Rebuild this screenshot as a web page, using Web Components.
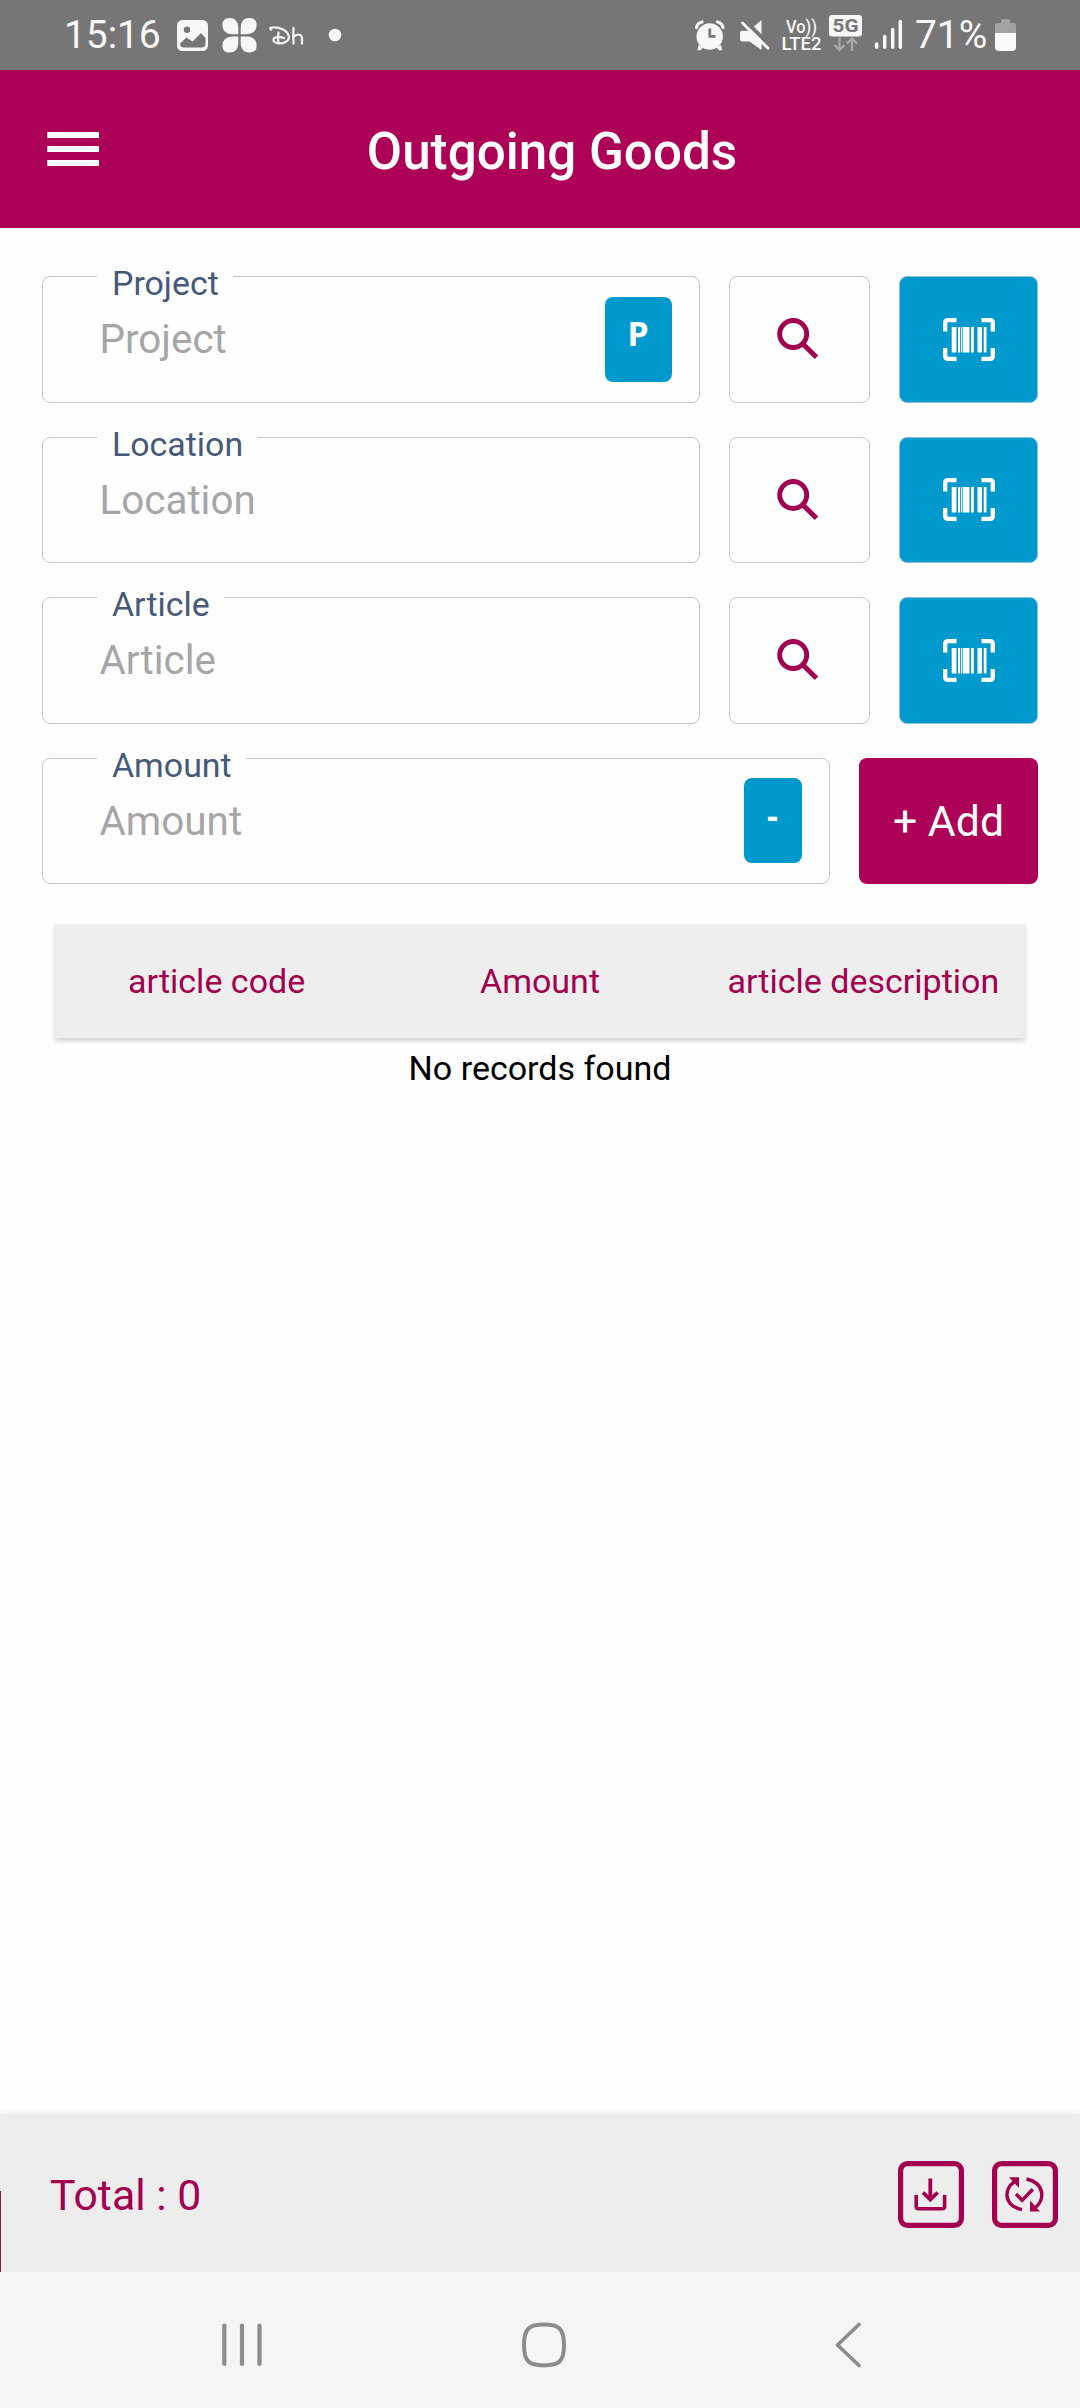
<!DOCTYPE html>
<html lang="en">
<head>
<meta charset="utf-8">
<title>Outgoing Goods</title>
<style>
html,body{margin:0;padding:0}
body{width:1080px;height:2408px;background:#fefefe;font-family:Roboto,"Liberation Sans",sans-serif;overflow:hidden;
--brand:#ad0057;--blue:#0099cd;--line:#c6c6c6}
</style>
</head>
<body>
<outgoing-app></outgoing-app>
<script>
const define=(name,html)=>customElements.define(name,class extends HTMLElement{
  constructor(){super();const t=document.createElement('template');t.innerHTML=html;
    this.attachShadow({mode:'open'}).append(t.content.cloneNode(true));}
});

define('status-bar',`<style>
:host{display:flex;height:70px;box-sizing:border-box;background:#767676;color:#f7f7f7;align-items:flex-start;line-height:70px;font-size:39px}
svg{display:block;flex:none}
.clock{width:111px;padding-left:64px;letter-spacing:-.1px;white-space:nowrap}
.pct{width:78px;letter-spacing:-.1px;white-space:nowrap}
.gap{flex:1}
</style>
<span class="clock">15:16</span>
<svg width="171" height="70" viewBox="175 0 171 70">
 <rect x="177" y="20" width="31" height="31" rx="5.500" fill="#f7f7f7"/>
 <circle cx="187" cy="29.700" r="3.200" fill="#767676"/>
 <path d="M180 43.500l6.500-6 6 4 8.500-8.500 4.500 5V43.500a4 4 0 0 1-4 4H184a4 4 0 0 1-4-4z" fill="#767676"/>
 <g fill="#f7f7f7">
 <path d="M238.300 34.200V28.500C238.300 21 235 18 229.500 18C224.500 18 222.400 21 222.400 24.700C222.400 31.500 227 34.200 233 34.200z"/>
 <path d="M238.300 34.200V28.500C238.300 21 235 18 229.500 18C224.500 18 222.400 21 222.400 24.700C222.400 31.500 227 34.200 233 34.200z" transform="translate(479 0) scale(-1 1)"/>
 <path d="M238.300 34.200V28.500C238.300 21 235 18 229.500 18C224.500 18 222.400 21 222.400 24.700C222.400 31.500 227 34.200 233 34.200z" transform="translate(0 70.600) scale(1 -1)"/>
 <path d="M238.300 34.200V28.500C238.300 21 235 18 229.500 18C224.500 18 222.400 21 222.400 24.700C222.400 31.500 227 34.200 233 34.200z" transform="translate(479 70.600) scale(-1 -1)"/>
 </g>
 <g fill="none" stroke="#f0f0f0" stroke-width="2.300" stroke-linecap="round">
 <path d="M271 29.500C267.500 27 277 26.500 283 29.500C289.500 33 291 39 285.500 42C281 44.500 273 43.500 273.500 39.500C274 36.500 280 36.500 284 38M278.500 32.500Q277.300 38 278.500 43"/>
 <path d="M293.500 28Q293 37 293.500 43.500M293.500 37.500C294.500 34.500 301.500 32.500 302 38L302 43.500"/>
 </g>
 <circle cx="335" cy="35" r="6.300" fill="#f7f7f7"/>
</svg>
<span class="gap"></span>
<svg width="222" height="70" viewBox="693 0 222 70">
 <g fill="#f7f7f7">
 <circle cx="709.700" cy="36.500" r="13.200"/>
 <path d="M698.500 45l5 2-3 3.300h-3zM721 45l-5 2 3 3.300h3z"/>
 </g>
 <g fill="none" stroke="#f7f7f7" stroke-width="3.200" stroke-linecap="round"><path d="M696.500 27.500Q697.500 23 702 22M723 27.500Q722 23 717.500 22"/></g>
 <path d="M709.800 28.500V36.300H715.500" fill="none" stroke="#767676" stroke-width="2.700"/>
 <path d="M740 33q0-2 2-2.300h7L761.500 20V50L749.500 41.500h-7.500q-2-.300-2-2.300z" fill="#f7f7f7"/>
 <path d="M744.300 19.800L770.500 46" stroke="#767676" stroke-width="4"/>
 <path d="M742.500 23L768 48.300" stroke="#f7f7f7" stroke-width="2.800" stroke-linecap="round"/>
 <g fill="#f7f7f7" font-family="Roboto,sans-serif" font-weight="500">
 <text x="786" y="33" font-size="17.500" textLength="31" lengthAdjust="spacingAndGlyphs">Vo))</text>
 <text x="781.500" y="50" font-size="17.500" textLength="40" lengthAdjust="spacingAndGlyphs">LTE2</text></g>
 <rect x="829" y="15" width="33" height="21.500" rx="3" fill="#f7f7f7"/>
 <text x="832.500" y="32.200" font-size="18.500" font-family="Roboto,sans-serif" font-weight="700" fill="#767676" textLength="26" lengthAdjust="spacingAndGlyphs">5G</text>
 <g fill="none" stroke="#a8a8a8" stroke-width="2.300"><path d="M839.500 37.500V49.500M834.500 45L839.500 50L844.500 45M852 51V39M847 43.500L852 38.500L857 43.500"/></g>
 <g stroke="#f7f7f7" stroke-width="3.500" stroke-linecap="round"><path d="M876.700 44V47.300M884.700 36.500V47.300M892.700 29.500V47.300M900.300 21.500V47.300"/></g>
</svg>
<span class="pct">71%</span>
<svg width="87" height="70" viewBox="993 0 87 70">
 <path d="M995 33V26q0-3 3-3h3v-1.500q0-2.500 2.500-2.500h4.500q2.500 0 2.500 2.500V23h2.500q3 0 3 3v7z" fill="#a3a3a3"/>
 <path d="M995 33h21V47q0 4-4 4H999q-4 0-4-4z" fill="#fafafa"/>
</svg>`);

define('app-header',`<style>
:host{display:grid;grid-template-columns:147px 1fr 123px;height:158px;background:var(--brand);color:#fff;align-items:center}
svg{display:block}
h1{margin:0;font-size:51.200px;font-weight:500;text-align:center;line-height:60px;white-space:nowrap;padding-top:5px}
</style>
<svg width="147" height="158" viewBox="0 70 147 158"><path d="M47.300 135h51.700M47.300 149h51.700M47.300 163h51.700" stroke="#fff" stroke-width="6"/></svg>
<h1><slot></slot></h1>`);

define('outlined-field',`<style>
:host{display:flex;position:relative;flex:1;box-sizing:border-box;border:1px solid var(--line);border-radius:8px;align-items:center;justify-content:space-between;padding:0 27.500px 0 56.500px}
.label{position:absolute;left:54px;top:-13px;padding:0 14.500px 0 15px;background:#fefefe;color:#465a78;font-size:33.900px;line-height:40px;white-space:nowrap}
.hint{color:#a6a6a6;font-size:40.400px;line-height:48px;white-space:nowrap;padding-top:2px}
</style>
<span class="label"><slot name="label"></slot></span>
<span class="hint"><slot></slot></span>
<slot name="badge"></slot>`);

define('field-badge',`<style>
:host{display:flex;box-sizing:border-box;width:67px;height:85px;border-radius:8px;background:var(--blue);color:#fff;font:700 34px "Noto Sans",sans-serif;align-items:center;justify-content:center;padding-bottom:12px}
:host([narrow]){width:58px}
</style><slot></slot>`);

define('search-button',`<style>
:host{display:flex;box-sizing:border-box;width:141px;border:1px solid var(--line);border-radius:8px}
svg{display:block;margin:38px 0 0 44.500px}
</style>
<svg width="46" height="46" viewBox="0 0 46 46" fill="none" stroke="#a0004f"><circle cx="18.200" cy="19" r="13.500" stroke-width="4.900"/><path d="M27.500 28.500L41.500 42.300" stroke-width="5"/></svg>`);

define('scan-button',`<style>
:host{display:flex;box-sizing:border-box;width:139px;border-radius:8px;background:var(--blue);border:1px solid #8cc6dc;align-items:center;justify-content:center}
svg{display:block}
</style>
<svg width="52" height="43" viewBox="0 0 52 43"><g fill="none" stroke="#fff" stroke-width="4.300"><path d="M2.200 13.500V5q0-2.800 2.800-2.800H13.500M38.500 2.200H47q2.800 0 2.800 2.800V13.500M49.800 30V38q0 2.800-2.800 2.800H38.500M13.500 40.800H5q-2.800 0-2.800-2.800V30"/></g>
<path fill="#fff" d="M8.700 9h4.800v25.500H8.700zM15 9h2v25.500H15zM17.900 9h1v25.500H17.900zM19.700 9h6.800v25.500H19.700zM28 9h2.800v25.500H28zM34.500 9h4.400v25.500H34.500zM40.800 9h2.700v25.500H40.800z"/></svg>`);

define('add-button',`<style>
:host{display:flex;width:179px;border-radius:8px;background:var(--brand);color:#fff;font-size:42.800px;align-items:center;justify-content:center;white-space:nowrap}
</style><slot></slot>`);

define('form-row',`<style>
:host{display:flex;height:126.500px;gap:29px;align-items:stretch}
</style><slot></slot>`);

define('goods-form',`<style>
:host{display:flex;flex-direction:column;gap:34px;padding:48px 42px 0 42px}
</style><slot></slot>`);

define('records-table',`<style>
:host{display:block;margin:40px 55px 0;flex:1}
.head{display:grid;grid-template-columns:repeat(3,1fr);height:114px;align-items:center;text-align:center;background:#eeeeee;color:#a3004f;font-size:34px;box-shadow:0 3px 5px rgba(0,0,0,.18);white-space:nowrap}
.empty{text-align:center;color:#000;font-size:34px;line-height:40px;margin-top:10px}
</style>
<div class="head"><slot name="col"></slot></div>
<div class="empty"><slot></slot></div>`);

define('total-bar',`<style>
:host{display:flex;box-sizing:border-box;height:158px;background:#ededed;color:#a3004f;align-items:center;justify-content:space-between;padding:0 22px 0 0;box-shadow:0 -2px 5px rgba(0,0,0,.06)}
.edge{width:1px;height:81px;background:#8a1453;align-self:flex-end}
.total{font-size:42.800px;flex:1;padding:3px 0 0 49px}
.actions{display:flex;gap:28px;padding-top:2px}
svg{display:block}
</style>
<i class="edge"></i>
<span class="total"><slot></slot></span>
<div class="actions">
<svg width="66" height="67" viewBox="0 0 66 67" fill="none" stroke="#a3004f"><rect x="2.600" y="2.600" width="60.800" height="61.800" rx="7" stroke-width="5.200"/><path d="M32.300 17.500V38M25 31.500L32.300 38.700L39.600 31.500" stroke-width="3.800"/><path d="M18.200 34V45.500q0 2.300 2.300 2.300H44.300q2.300 0 2.300-2.300V34" stroke-width="3.600"/></svg>
<svg width="66" height="67" viewBox="0 0 66 67" fill="none" stroke="#a3004f"><rect x="2.600" y="2.600" width="60.800" height="61.800" rx="7" stroke-width="5.200"/><path d="M30 48.600C11 44.500 12 27.500 22.300 21M34.500 18C53 22 53 39 43.500 46.500" stroke-width="3.500"/><path d="M17 16.300H27V27zM38 39.500V50.500H48z" fill="#a3004f" stroke="none"/><path d="M24 33L30.200 39.200L40.800 28.300" stroke-width="3.500"/></svg>
</div>`);

define('nav-bar',`<style>
:host{display:grid;grid-template-columns:301px 312.500px 1fr;height:136px;background:#f5f5f5;align-items:center;padding:0 0 0 221px}
svg{display:block;margin-top:9px}
</style>
<svg width="42" height="46" viewBox="0 0 42 46"><path d="M3.300 3.500V42M21 3.500V42M38.500 3.500V42" stroke="#8c8c8c" stroke-width="4.200" stroke-linecap="round"/></svg>
<svg width="44" height="46" viewBox="0 0 44 46"><path d="M22 2.600C36.500 2.600 42 6 42 23S36.500 43.400 22 43.400S2 40 2 23S7.500 2.600 22 2.600z" fill="none" stroke="#8c8c8c" stroke-width="4"/></svg>
<svg width="27" height="46" viewBox="0 0 27 46"><path d="M24 2.500L2.500 23L24 43.500" fill="none" stroke="#8c8c8c" stroke-width="3.600" stroke-linecap="round" stroke-linejoin="round"/></svg>`);

define('outgoing-app',`<style>
:host{display:flex;flex-direction:column;width:1080px;height:2408px;background:#fefefe}
</style>
<status-bar></status-bar>
<app-header>Outgoing Goods</app-header>
<goods-form>
 <form-row><outlined-field><span slot="label">Project</span>Project<field-badge slot="badge">P</field-badge></outlined-field><search-button></search-button><scan-button></scan-button></form-row>
 <form-row><outlined-field><span slot="label">Location</span>Location</outlined-field><search-button></search-button><scan-button></scan-button></form-row>
 <form-row><outlined-field><span slot="label">Article</span>Article</outlined-field><search-button></search-button><scan-button></scan-button></form-row>
 <form-row><outlined-field><span slot="label">Amount</span>Amount<field-badge slot="badge" narrow>-</field-badge></outlined-field><add-button>+ Add</add-button></form-row>
</goods-form>
<records-table><span slot="col">article code</span><span slot="col">Amount</span><span slot="col">article description</span>No records found</records-table>
<total-bar>Total : 0</total-bar>
<nav-bar></nav-bar>`);
</script>
</body>
</html>
